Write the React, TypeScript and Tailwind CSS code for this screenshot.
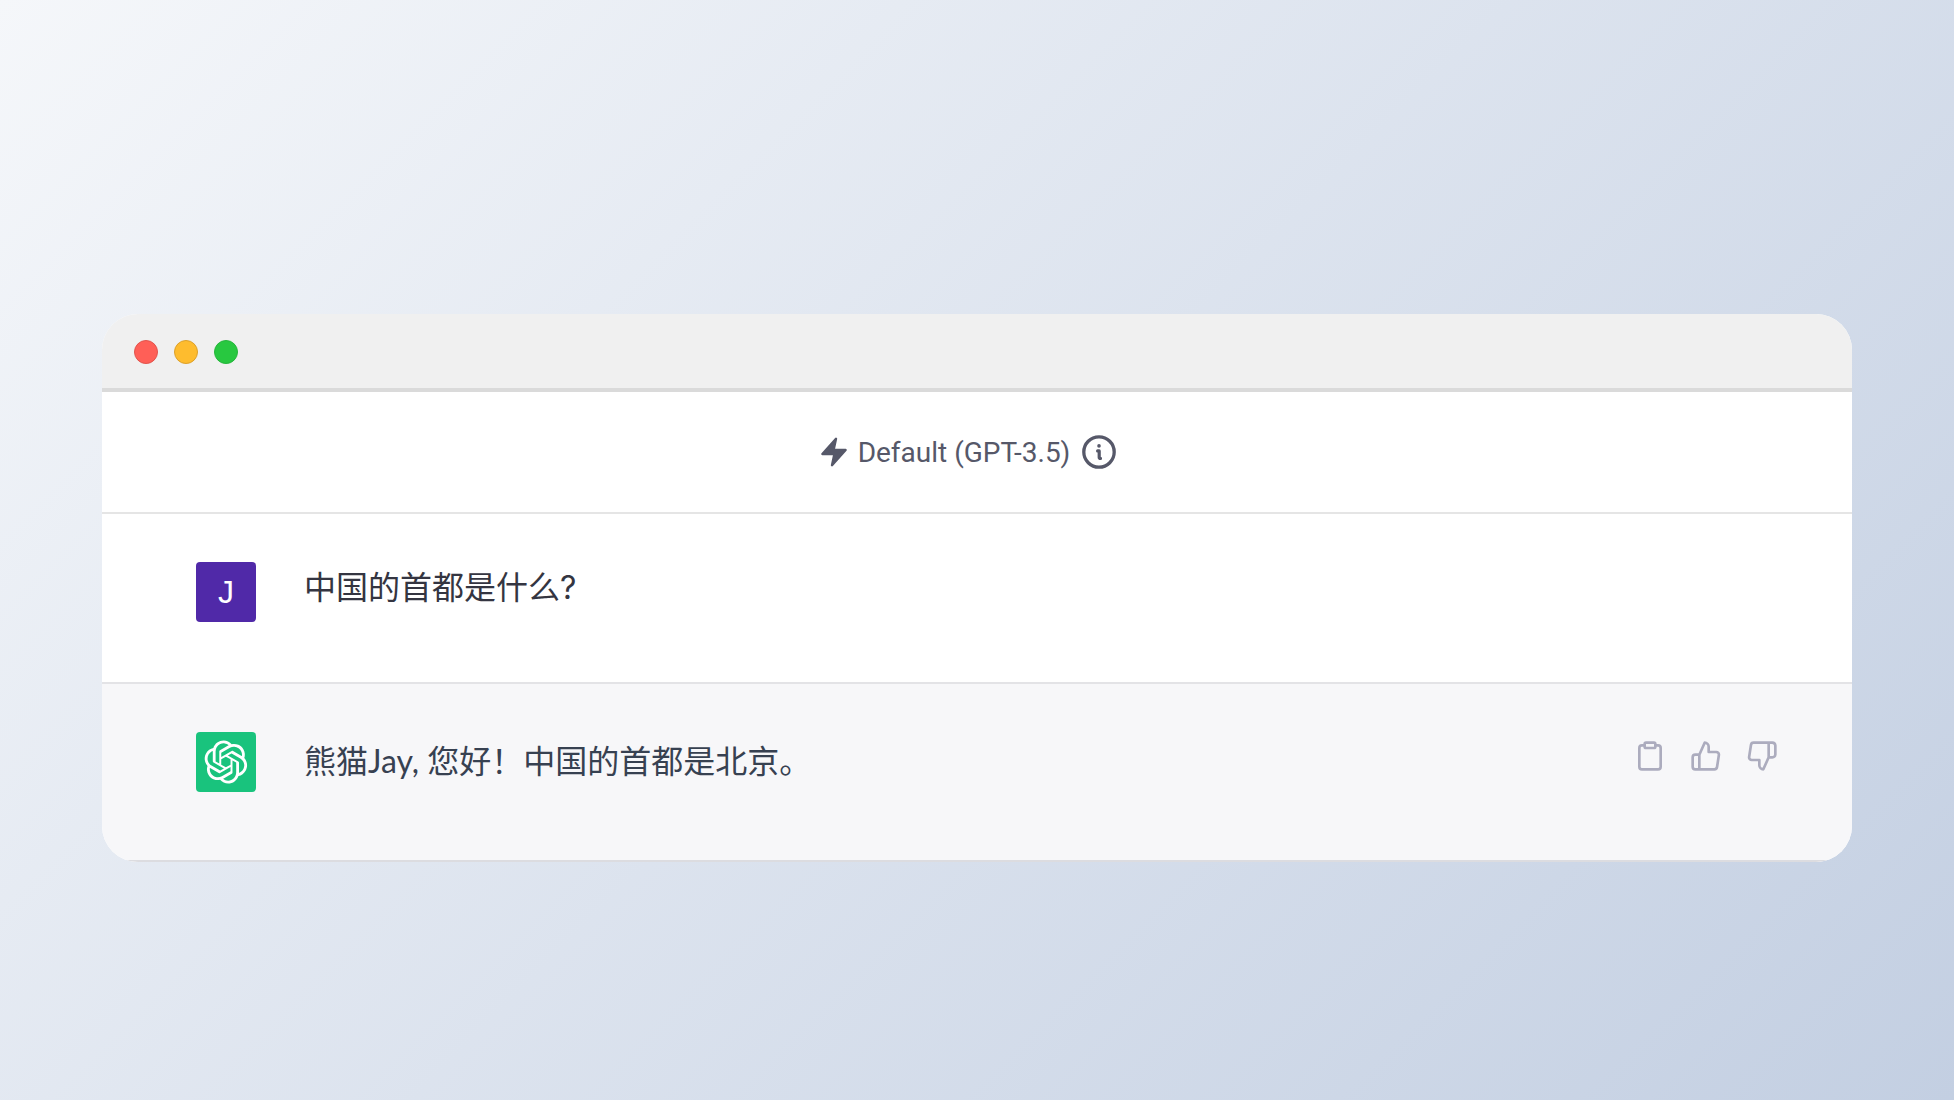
import type { ReactNode } from "react";
import { FiClipboard, FiThumbsDown, FiThumbsUp } from "react-icons/fi";

function BoltIcon() {
  return (
    <svg viewBox="0 0 16 16" fill="currentColor" className="size-8" aria-hidden="true">
      <path d="M9.586 1.526A.6.6 0 0 0 8.553 1l-6.8 7.6a.6.6 0 0 0 .447 1h5.258l-1.044 4.874A.6.6 0 0 0 7.447 15l6.8-7.6a.6.6 0 0 0-.447-1H8.542l1.044-4.874Z" />
    </svg>
  );
}

function InfoIcon() {
  return (
    <svg viewBox="0 0 34 34" fill="none" stroke="currentColor" strokeLinecap="round" className="size-[34px]" aria-hidden="true">
      <circle cx="17" cy="17" r="15.2" strokeWidth="3.3" />
      <circle cx="17" cy="10.9" r="1.8" fill="currentColor" stroke="none" />
      <path d="M15.6 15.9H17.2V22.2Q17.2 23.4 18.5 23.4" strokeWidth="3.2" strokeLinejoin="round" />
    </svg>
  );
}

function OpenAILogo() {
  return (
    <svg viewBox="0 0 41 41" fill="currentColor" className="size-11" role="img" aria-label="ChatGPT">
      <path d="M37.5324 16.8707C37.9808 15.5241 38.1363 14.0974 37.9886 12.6859C37.8409 11.2744 37.3934 9.91076 36.676 8.68622C35.6126 6.83404 33.9882 5.3676 32.0373 4.4985C30.0864 3.62941 27.9098 3.40259 25.8215 3.85078C24.8796 2.7893 23.7219 1.94125 22.4257 1.36341C21.1295 0.785575 19.7249 0.491269 18.3058 0.500197C16.1708 0.495044 14.0893 1.16803 12.3614 2.42214C10.6335 3.67624 9.34853 5.44666 8.6917 7.47815C7.30085 7.76286 5.98686 8.3414 4.8377 9.17505C3.68854 10.0087 2.73073 11.0782 2.02839 12.312C0.956464 14.1591 0.498905 16.2988 0.721698 18.4228C0.944492 20.5467 1.83612 22.5449 3.268 24.1293C2.81966 25.4759 2.66413 26.9026 2.81182 28.3141C2.95951 29.7256 3.40701 31.0892 4.12437 32.3138C5.18791 34.1659 6.8123 35.6322 8.76321 36.5013C10.7141 37.3704 12.8907 37.5973 14.9789 37.1492C15.9208 38.2107 17.0786 39.0587 18.3747 39.6366C19.6709 40.2144 21.0755 40.5087 22.4946 40.4998C24.6307 40.5054 26.7133 39.8321 28.4418 38.5772C30.1704 37.3223 31.4556 35.5506 32.1119 33.5179C33.5027 33.2332 34.8167 32.6547 35.9659 31.821C37.115 30.9874 38.0728 29.9178 38.7752 28.684C39.8458 26.8371 40.3023 24.6979 40.0789 22.5748C39.8556 20.4517 38.9639 18.4544 37.5324 16.8707ZM22.4978 37.8849C20.7443 37.8874 19.0459 37.2733 17.6994 36.1501C17.7601 36.117 17.8666 36.0586 17.936 36.0161L25.9004 31.4156C26.1003 31.3019 26.2663 31.137 26.3813 30.9378C26.4964 30.7386 26.5563 30.5124 26.5549 30.2825V19.0542L29.9213 20.998C29.9389 21.0068 29.9541 21.0198 29.9656 21.0359C29.977 21.052 29.9842 21.0707 29.9867 21.0902V30.3889C29.9842 32.375 29.1946 34.2791 27.7909 35.6841C26.3872 37.0892 24.4838 37.8806 22.4978 37.8849ZM6.39227 31.0064C5.51397 29.4888 5.19742 27.7107 5.49804 25.9832C5.55718 26.0187 5.66048 26.0818 5.73461 26.1244L13.699 30.7248C13.8975 30.8408 14.1233 30.902 14.3532 30.902C14.583 30.902 14.8088 30.8408 15.0073 30.7248L24.731 25.1103V28.9979C24.7321 29.0177 24.7283 29.0376 24.7199 29.0556C24.7115 29.0736 24.6988 29.0893 24.6829 29.1012L16.6317 33.7497C14.9096 34.7416 12.8643 35.0097 10.9447 34.4954C9.02506 33.9811 7.38785 32.7263 6.39227 31.0064ZM4.29707 13.6194C5.17156 12.0998 6.55279 10.9364 8.19885 10.3327C8.19885 10.4013 8.19491 10.5228 8.19491 10.6071V19.808C8.19351 20.0378 8.25334 20.2638 8.36823 20.4629C8.48312 20.6619 8.64893 20.8267 8.84863 20.9404L18.5723 26.5542L15.206 28.4979C15.1894 28.5089 15.1703 28.5155 15.1505 28.5173C15.1307 28.5191 15.1107 28.516 15.0924 28.5082L7.04046 23.8557C5.32135 22.8601 4.06716 21.2235 3.55289 19.3046C3.03862 17.3858 3.30624 15.3413 4.29707 13.6194ZM31.955 20.0556L22.2312 14.4411L25.5976 12.4981C25.6142 12.4872 25.6333 12.4805 25.6531 12.4787C25.6729 12.4769 25.6928 12.4801 25.7111 12.4879L33.7631 17.1364C34.9967 17.849 36.0017 18.8982 36.6606 20.1613C37.3194 21.4244 37.6047 22.849 37.4832 24.2684C37.3617 25.6878 36.8382 27.0432 35.9743 28.1759C35.1103 29.3086 33.9415 30.1717 32.6047 30.6641C32.6047 30.5947 32.6047 30.4733 32.6047 30.3889V21.188C32.6066 20.9586 32.5474 20.7328 32.4332 20.5338C32.319 20.3348 32.154 20.1698 31.955 20.0556ZM35.3055 15.0128C35.2464 14.9765 35.1431 14.9142 35.069 14.8717L27.1045 10.2712C26.906 10.1554 26.6803 10.0943 26.4504 10.0943C26.2206 10.0943 25.9948 10.1554 25.7963 10.2712L16.0726 15.8858V11.9982C16.0715 11.9783 16.0753 11.9585 16.0837 11.9405C16.0921 11.9225 16.1048 11.9068 16.1207 11.8949L24.1719 7.25025C25.4053 6.53903 26.8158 6.19376 28.2383 6.25482C29.6608 6.31589 31.0364 6.78077 32.2044 7.59508C33.3723 8.40939 34.2842 9.53945 34.8334 10.8531C35.3826 12.1667 35.5464 13.6095 35.3055 15.0128ZM14.2424 21.9419L10.8752 19.9981C10.8576 19.9893 10.8423 19.9763 10.8309 19.9602C10.8195 19.9441 10.8122 19.9254 10.8098 19.9058V10.6071C10.8107 9.18295 11.2173 7.78848 11.9819 6.58696C12.7466 5.38544 13.8377 4.42659 15.1275 3.82264C16.4173 3.21869 17.8524 2.99464 19.2649 3.1767C20.6775 3.35876 22.0089 3.93941 23.1034 4.85067C23.0427 4.88379 22.937 4.94215 22.8668 4.98473L14.9024 9.58517C14.7025 9.69878 14.5366 9.86356 14.4215 10.0626C14.3065 10.2616 14.2466 10.4877 14.2479 10.7175L14.2424 21.9419ZM16.071 17.9991L20.4018 15.4978L24.7325 17.9975V22.9985L20.4018 25.4983L16.071 22.9985V17.9991Z" />
    </svg>
  );
}

function IconButton({ label, children }: { label: string; children: ReactNode }) {
  return (
    <button type="button" aria-label={label} className="cursor-pointer hover:text-[#40414f]">
      {children}
    </button>
  );
}

export default function App() {
  return (
    <div className="flex min-h-screen flex-col justify-center bg-linear-135 from-[#f5f7fa] to-[#c3cfe2] px-[102px] pt-[76px] font-['Inter','Noto_Sans_CJK_SC',sans-serif]">
      <main className="overflow-hidden rounded-[36px] bg-white">
        <header className="flex gap-4 border-b-4 border-[#dadada] bg-[#f0f0f0] px-8 pt-[26px] pb-6">
          <button type="button" aria-label="Close" className="size-6 rounded-full border border-[#e0544d] bg-[#ff5f57]" />
          <button type="button" aria-label="Minimize" className="size-6 rounded-full border border-[#dba02c] bg-[#febc2e]" />
          <button type="button" aria-label="Zoom" className="size-6 rounded-full border border-[#27b53c] bg-[#28c840]" />
        </header>

        <div className="flex items-center justify-center gap-2 border-b-2 border-[#e5e5e5] py-10 pr-5 text-[#565869]">
          <BoltIcon />
          <h1 className="pt-0.5 font-['Roboto',sans-serif] text-[28px] leading-[38px]">Default (GPT-3.5)</h1>
          <button type="button" aria-label="Model information" className="ml-1">
            <InfoIcon />
          </button>
        </div>

        <article className="flex items-start gap-12 border-b-2 border-[#e3e3e6] px-[94px] pt-12 pb-[60px] text-[#343541]">
          <div className="flex size-[60px] items-center justify-center rounded-sm bg-[#5029a8] font-['Liberation_Sans',sans-serif] text-[32px] leading-none text-white">
            J
          </div>
          <p className="text-[32px] leading-[52px]">中国的首都是什么?</p>
        </article>

        <article className="flex items-start gap-12 border-b-2 border-[#dcdce0] bg-[#f7f7f9] pt-12 pr-[74px] pb-[68px] pl-[94px] text-[#374151]">
          <div className="flex size-[60px] items-center justify-center rounded-sm bg-[#19c37d] text-white">
            <OpenAILogo />
          </div>
          <p className="flex-1 font-['Lato','Noto_Sans_CJK_SC',sans-serif] text-[32px] leading-[58px]">
            熊猫Jay, 您好！中国的首都是北京。
          </p>
          <div className="flex gap-6 pt-2 text-[#acacbe]">
            <IconButton label="Copy">
              <FiClipboard className="size-8" />
            </IconButton>
            <IconButton label="Good response">
              <FiThumbsUp className="size-8" />
            </IconButton>
            <IconButton label="Bad response">
              <FiThumbsDown className="size-8" />
            </IconButton>
          </div>
        </article>
      </main>
    </div>
  );
}
